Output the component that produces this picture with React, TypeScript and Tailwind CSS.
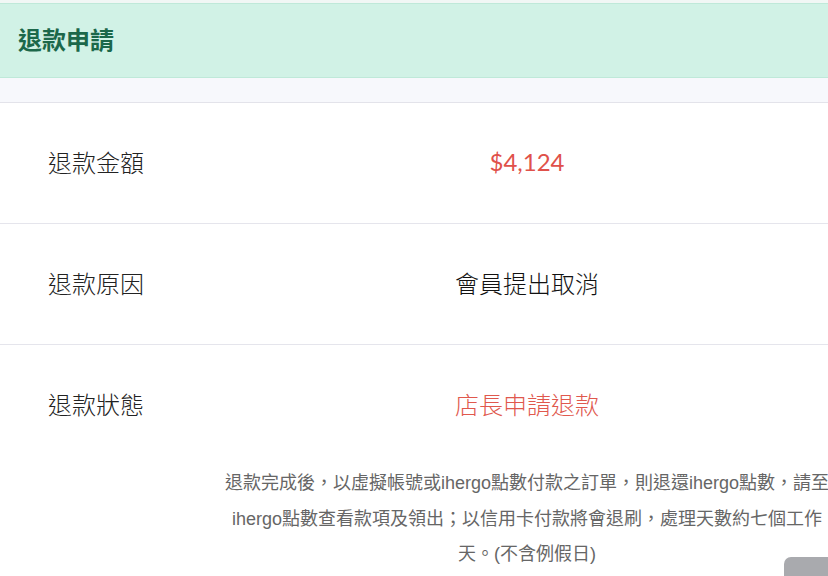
export default function App() {
  const cjk = { fontFamily: '"Noto Sans CJK TC", "Noto Sans", sans-serif' };
  const rows = [
    { label: "退款金額", value: "$4,124", cls: "text-[#e0514a]", latin: true },
    { label: "退款原因", value: "會員提出取消", cls: "text-[#111]", latin: false },
  ];
  return (
    <div className="relative w-full h-[576px] overflow-hidden bg-white" style={cjk}>
      <div className="h-[3px] bg-[#f1f7f5]" />
      <div className="h-[75px] bg-[#d1f2e6] border-y border-[#bfe9d9] flex items-center px-[18px] pb-[3px]">
        <h1 className="text-[24px] font-bold text-[#1c684a] leading-none">退款申請</h1>
      </div>
      <div className="h-[25px] bg-[#f7f8fc] border-b border-[#e3e3ea]" />

      {rows.map((r) => (
        <div
          key={r.label}
          className="grid grid-cols-[225px_604px] h-[121px] border-b border-[#e5e5ec] items-center pb-[3px]"
        >
          <div className="pl-[48px] text-[24px] text-[#222] leading-none font-light">{r.label}</div>
          <div
            className={`text-center text-[24px] leading-none font-light ${r.cls}`}
            style={r.latin ? { fontFamily: 'Lato, "Noto Sans CJK TC", sans-serif', fontWeight: 400 } : undefined}
          >
            {r.value}
          </div>
        </div>
      ))}

      <div className="grid grid-cols-[225px_604px] h-[120px] items-center pb-[2px]">
        <div className="pl-[48px] text-[24px] text-[#222] leading-none font-light">退款狀態</div>
        <div className="text-center text-[24px] leading-none font-light text-[#e0584d]">店長申請退款</div>
      </div>

      <p
        className="ml-[221px] w-[612px] text-center text-[18px] leading-[35.5px] text-[#666] mt-[1px]"
        style={{ fontFamily: '"Liberation Sans", "Noto Sans CJK TC", sans-serif' }}
      >
        退款完成後，以虛擬帳號或ihergo點數付款之訂單，則退還ihergo點數，請至ihergo點數查看款項及領出；以信用卡付款將會退刷，處理天數約七個工作天。(不含例假日)
      </p>

      <div className="absolute left-[784px] top-[557px] w-[60px] h-[60px] rounded-[7px] bg-[#a9aaae]" />
    </div>
  );
}
